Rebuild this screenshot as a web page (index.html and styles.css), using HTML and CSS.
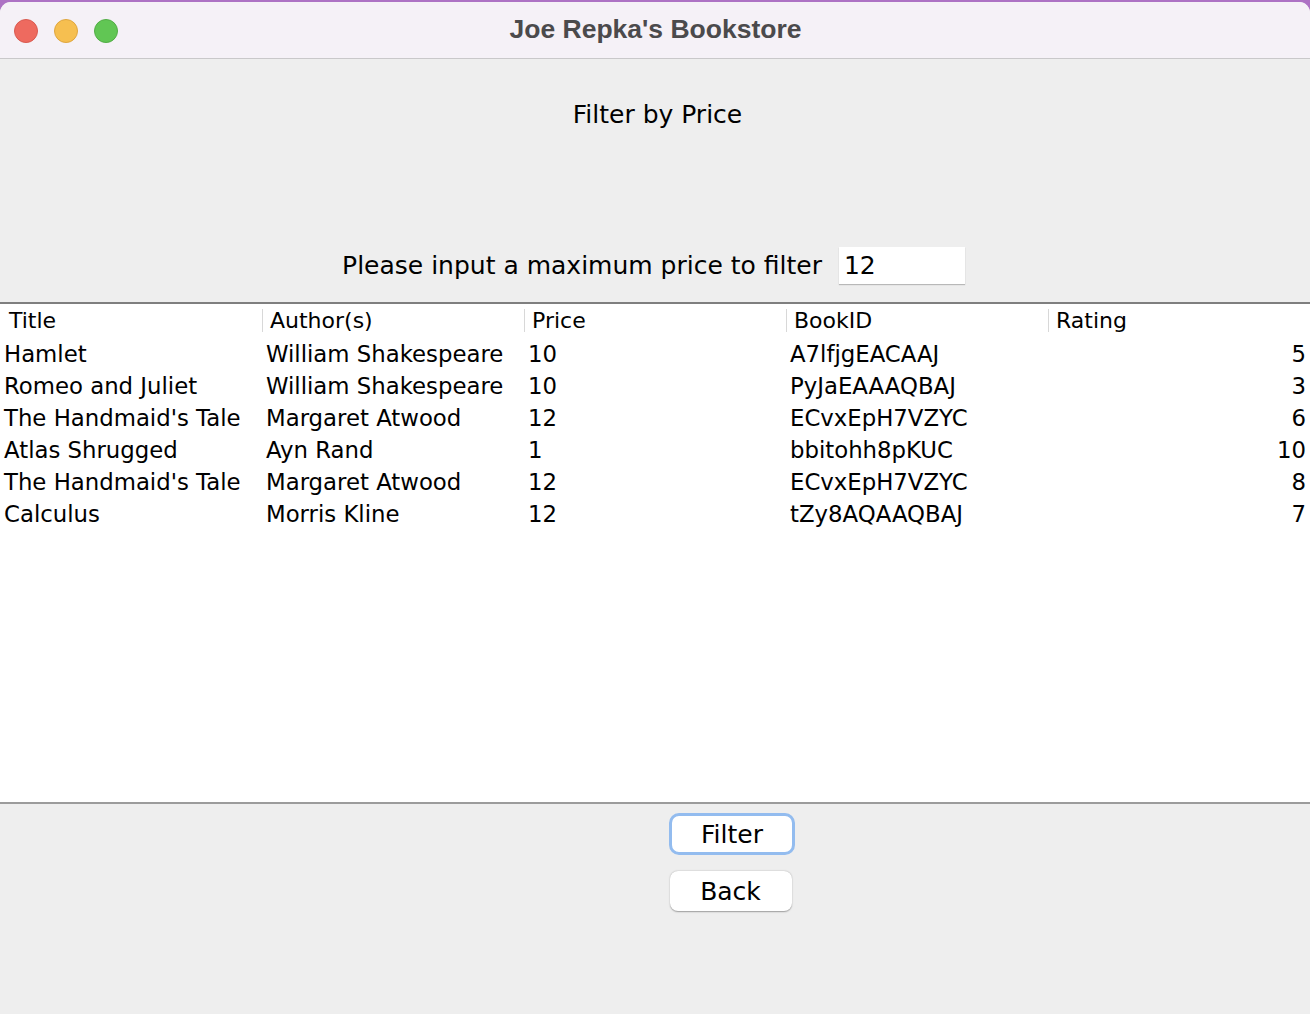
FILE: index.html
```html
<!DOCTYPE html>
<html>
<head>
<meta charset="utf-8">
<link rel="stylesheet" href="styles.css">
</head>
<body>
<div class="window">
  <div class="titlebar">
    <div class="lights">
      <span class="light red"></span>
      <span class="light yellow"></span>
      <span class="light green"></span>
    </div>
    <div class="title">Joe Repka's Bookstore</div>
  </div>
  <div class="content">
    <div class="heading">Filter by Price</div>
    <div class="inputrow">
      <span class="label">Please input a maximum price to filter</span>
      <span class="field">12</span>
    </div>
    <div class="table">
      <div class="thead">
        <div class="th first"><span>Title</span></div>
        <div class="th"><span>Author(s)</span></div>
        <div class="th"><span>Price</span></div>
        <div class="th"><span>BookID</span></div>
        <div class="th"><span>Rating</span></div>
      </div>
      <div class="tbody">
        <div class="tr"><div class="td">Hamlet</div><div class="td">William Shakespeare</div><div class="td">10</div><div class="td">A7lfjgEACAAJ</div><div class="td num">5</div></div>
        <div class="tr"><div class="td">Romeo and Juliet</div><div class="td">William Shakespeare</div><div class="td">10</div><div class="td">PyJaEAAAQBAJ</div><div class="td num">3</div></div>
        <div class="tr"><div class="td">The Handmaid's Tale</div><div class="td">Margaret Atwood</div><div class="td">12</div><div class="td">ECvxEpH7VZYC</div><div class="td num">6</div></div>
        <div class="tr"><div class="td">Atlas Shrugged</div><div class="td">Ayn Rand</div><div class="td">1</div><div class="td">bbitohh8pKUC</div><div class="td num">10</div></div>
        <div class="tr"><div class="td">The Handmaid's Tale</div><div class="td">Margaret Atwood</div><div class="td">12</div><div class="td">ECvxEpH7VZYC</div><div class="td num">8</div></div>
        <div class="tr"><div class="td">Calculus</div><div class="td">Morris Kline</div><div class="td">12</div><div class="td">tZy8AQAAQBAJ</div><div class="td num">7</div></div>
      </div>
    </div>
    <div class="buttons">
      <button class="btn focused">Filter</button>
      <button class="btn">Back</button>
    </div>
  </div>
</div>
</body>
</html>
```

FILE: styles.css
```css
html, body {
  margin: 0;
  padding: 0;
  background: #ad72c4;
  height: 1014px;
  overflow: hidden;
}
.window {
  margin-top: 2px;
  height: 1012px;
  border-radius: 11px 11px 0 0;
  overflow: hidden;
  background: #eeeeee;
  display: flex;
  flex-direction: column;
  font-family: "DejaVu Sans", sans-serif;
  color: #000;
}
.titlebar {
  height: 56px;
  background: #f5f1f7;
  border-bottom: 1px solid #c9c8ca;
  display: flex;
  align-items: center;
  position: relative;
}
.lights {
  display: flex;
  gap: 16px;
  padding-left: 14px;
  padding-top: 1px;
}
.light {
  width: 24px;
  height: 24px;
  border-radius: 50%;
  box-sizing: border-box;
}
.red { background: #ee6a5f; border: 1px solid #d95a50; }
.yellow { background: #f6bf50; border: 1px solid #dfa63f; }
.green { background: #61c654; border: 1px solid #52ad46; }
.title {
  position: absolute;
  left: 0;
  right: 0;
  top: 0;
  bottom: 2px;
  display: flex;
  align-items: center;
  justify-content: center;
  font-family: "Liberation Sans", Arial, sans-serif;
  font-weight: bold;
  font-size: 26.5px;
  color: #4b4a4c;
  padding-left: 1px;
}
.content {
  flex: 1;
  display: flex;
  flex-direction: column;
}
.heading {
  margin-top: 40px;
  height: 32px;
  line-height: 32px;
  text-align: center;
  font-size: 25px;
  padding-left: 5px;
}
.inputrow {
  margin-top: 116px;
  height: 37px;
  display: flex;
  justify-content: center;
  align-items: center;
  gap: 17px;
  padding-right: 3px;
  font-size: 25px;
}
.field {
  width: 126px;
  height: 37px;
  background: #fff;
  box-shadow: 0 1px 1px #b8b8b8;
  box-sizing: border-box;
  padding-left: 5px;
  line-height: 38px;
}
.table {
  margin-top: 18px;
  height: 498px;
  background: #fff;
  border-top: 2px solid #7f7f7f;
  border-bottom: 2px solid #9b9b9b;
}
.thead, .tr {
  display: grid;
  grid-template-columns: repeat(5, 262px);
}
.thead {
  height: 34px;
  align-items: center;
  font-size: 22px;
}
.th {
  padding-bottom: 1px;
}
.th span {
  display: block;
  border-left: 1px solid #d8d8d8;
  padding-left: 7px;
  line-height: 23px;
}
.th.first span {
  border-left: none;
  padding-left: 9px;
}
.tr {
  height: 32px;
  line-height: 32px;
  font-size: 22.8px;
}
.td {
  padding-left: 4px;
  white-space: nowrap;
}
.td.num {
  text-align: right;
  padding-right: 4px;
}
.buttons {
  display: flex;
  flex-direction: column;
  align-items: center;
  gap: 16px;
  margin-top: 9px;
  padding-left: 151px;
}
.btn {
  width: 122px;
  height: 40px;
  background: #fff;
  border: none;
  border-radius: 8px;
  box-shadow: 0 0.5px 1.5px rgba(0,0,0,0.35);
  font-family: "DejaVu Sans", sans-serif;
  font-size: 25px;
  color: #000;
  padding: 0;
}
.btn.focused {
  width: 126px;
  height: 42px;
  border: 3px solid #93bcef;
  border-radius: 10px;
  box-shadow: none;
  margin-left: 3px;
}
```
